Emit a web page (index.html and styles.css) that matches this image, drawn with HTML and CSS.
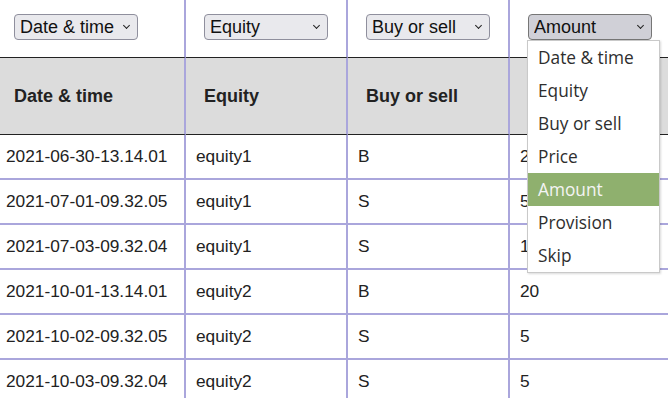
FILE: index.html
```html
<!DOCTYPE html>
<html>
<head>
  <title>Import transactions</title>
  <link rel="stylesheet" href="styles.css">
</head>
<body>
  <table class="import">
    <thead>
      <tr class="mapping">
        <td class="c1">
          <span class="picker">
            <select>
              <option selected>Date &amp; time</option>
              <option>Equity</option>
              <option>Buy or sell</option>
              <option>Price</option>
              <option>Amount</option>
              <option>Provision</option>
              <option>Skip</option>
            </select>
          </span>
        </td>
        <td class="c2">
          <span class="picker">
            <select>
              <option>Date &amp; time</option>
              <option selected>Equity</option>
              <option>Buy or sell</option>
              <option>Price</option>
              <option>Amount</option>
              <option>Provision</option>
              <option>Skip</option>
            </select>
          </span>
        </td>
        <td class="c3">
          <span class="picker">
            <select>
              <option>Date &amp; time</option>
              <option>Equity</option>
              <option selected>Buy or sell</option>
              <option>Price</option>
              <option>Amount</option>
              <option>Provision</option>
              <option>Skip</option>
            </select>
          </span>
        </td>
        <td class="c4">
          <span class="picker">
            <select class="open">
              <option>Date &amp; time</option>
              <option>Equity</option>
              <option>Buy or sell</option>
              <option>Price</option>
              <option selected>Amount</option>
              <option>Provision</option>
              <option>Skip</option>
            </select>
            <ul class="popup">
              <li>Date &amp; time</li>
              <li>Equity</li>
              <li>Buy or sell</li>
              <li>Price</li>
              <li class="hover">Amount</li>
              <li>Provision</li>
              <li>Skip</li>
            </ul>
          </span>
        </td>
      </tr>
      <tr class="titles">
        <th>Date &amp; time</th>
        <th>Equity</th>
        <th>Buy or sell</th>
        <th>Amount</th>
      </tr>
    </thead>
    <tbody>
      <tr><td>2021-06-30-13.14.01</td><td>equity1</td><td>B</td><td>20</td></tr>
      <tr><td>2021-07-01-09.32.05</td><td>equity1</td><td>S</td><td>5</td></tr>
      <tr><td>2021-07-03-09.32.04</td><td>equity1</td><td>S</td><td>10</td></tr>
      <tr><td>2021-10-01-13.14.01</td><td>equity2</td><td>B</td><td>20</td></tr>
      <tr><td>2021-10-02-09.32.05</td><td>equity2</td><td>S</td><td>5</td></tr>
      <tr><td>2021-10-03-09.32.04</td><td>equity2</td><td>S</td><td>5</td></tr>
    </tbody>
  </table>
</body>
</html>
```

FILE: styles.css
```css
body {
  margin: 0;
  font-family: "Liberation Sans", Arial, sans-serif;
  color: #222;
  background-color: #fff;
  overflow: hidden;
}
.import {
  border-collapse: separate;
  border-spacing: 0;
  table-layout: fixed;
  width: 676px;
  margin-left: -4px;
  font-size: 17.3px;
}
.import td,
.import th {
  box-sizing: border-box;
  border-right: 2px solid #aaa6dc;
  text-align: left;
  vertical-align: middle;
  white-space: nowrap;
  padding: 0 10px;
}
.import .c1 { width: 190px; }
.import .c2,
.import .c3 { width: 162px; }
.mapping td {
  height: 57px;
  padding: 0 18px;
}
.picker {
  position: relative;
  display: inline-block;
  vertical-align: middle;
  margin-top: -3px;
}
.picker::after {
  content: "";
  position: absolute;
  top: 9px;
  right: 9px;
  width: 4px;
  height: 4px;
  border-right: 1.5px solid #222;
  border-bottom: 1.5px solid #222;
  transform: rotate(45deg);
  pointer-events: none;
}
.picker select {
  -webkit-appearance: none;
  appearance: none;
  display: block;
  box-sizing: border-box;
  width: 124px;
  height: 26px;
  padding: 0 0 0 5px;
  font-family: "Liberation Sans", Arial, sans-serif;
  font-size: 18px;
  color: #111;
  background-color: #e9e9ed;
  border: 1px solid #8f8f9d;
  border-radius: 4px;
}
.picker select.open {
  background-color: #d0d0d7;
  border-color: #767676;
}
.titles th {
  height: 78px;
  padding: 0 18px;
  font-size: 18px;
  background-color: #dcdcdc;
  border-top: 1px solid #222;
  border-bottom: 1px solid #222;
  font-weight: bold;
}
tbody td {
  height: 45px;
  border-bottom: 2px solid #aaa6dc;
}
.popup {
  position: absolute;
  top: 100%;
  left: -1px;
  z-index: 2;
  width: 131px;
  margin: 0;
  padding: 0;
  list-style: none;
  background-color: #fff;
  border: 1px solid #c9c9c9;
  box-shadow: 1px 1px 2px rgba(0, 0, 0, 0.15);
  font-family: "Open Sans", "Noto Sans", sans-serif;
  font-size: 17.3px;
  color: #2e2e2e;
}
.popup li {
  height: 33px;
  line-height: 33px;
  padding-left: 10px;
}
.popup li.hover {
  background-color: #8fb06e;
  color: #f4f4f4;
}
```
